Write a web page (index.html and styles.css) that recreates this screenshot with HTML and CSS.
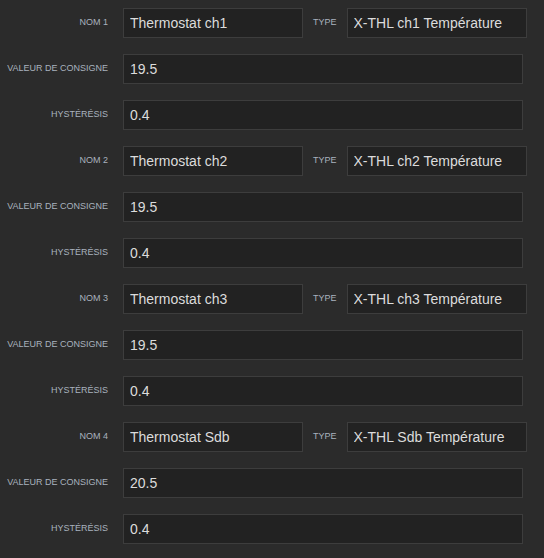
FILE: index.html
```html
<!DOCTYPE html>
<html>
<head>
  <meta charset="utf-8">
  <title>Thermostats</title>
  <link rel="stylesheet" href="styles.css">
</head>
<body>
  <div class="settings">

    <div class="group">
      <div class="row">
        <label class="lbl">Nom 1</label>
        <input class="field short" type="text" value="Thermostat ch1">
        <label class="lbl type-lbl">Type</label>
        <input class="field short" type="text" value="X-THL ch1 Température">
      </div>
      <div class="row">
        <label class="lbl">Valeur de consigne</label>
        <input class="field long" type="text" value="19.5">
      </div>
      <div class="row">
        <label class="lbl">Hystérésis</label>
        <input class="field long" type="text" value="0.4">
      </div>
    </div>

    <div class="group">
      <div class="row">
        <label class="lbl">Nom 2</label>
        <input class="field short" type="text" value="Thermostat ch2">
        <label class="lbl type-lbl">Type</label>
        <input class="field short" type="text" value="X-THL ch2 Température">
      </div>
      <div class="row">
        <label class="lbl">Valeur de consigne</label>
        <input class="field long" type="text" value="19.5">
      </div>
      <div class="row">
        <label class="lbl">Hystérésis</label>
        <input class="field long" type="text" value="0.4">
      </div>
    </div>

    <div class="group">
      <div class="row">
        <label class="lbl">Nom 3</label>
        <input class="field short" type="text" value="Thermostat ch3">
        <label class="lbl type-lbl">Type</label>
        <input class="field short" type="text" value="X-THL ch3 Température">
      </div>
      <div class="row">
        <label class="lbl">Valeur de consigne</label>
        <input class="field long" type="text" value="19.5">
      </div>
      <div class="row">
        <label class="lbl">Hystérésis</label>
        <input class="field long" type="text" value="0.4">
      </div>
    </div>

    <div class="group">
      <div class="row">
        <label class="lbl">Nom 4</label>
        <input class="field short" type="text" value="Thermostat Sdb">
        <label class="lbl type-lbl">Type</label>
        <input class="field short" type="text" value="X-THL Sdb Température">
      </div>
      <div class="row">
        <label class="lbl">Valeur de consigne</label>
        <input class="field long" type="text" value="20.5">
      </div>
      <div class="row">
        <label class="lbl">Hystérésis</label>
        <input class="field long" type="text" value="0.4">
      </div>
    </div>

  </div>
</body>
</html>
```

FILE: styles.css
```css
* {
  margin: 0;
  padding: 0;
  box-sizing: border-box;
}

html, body {
  background-color: #2b2b2b;
}

body {
  font-family: "Liberation Sans", Arial, sans-serif;
  padding-top: 8px;
}

.settings {
  display: flex;
  flex-direction: column;
  gap: 16px;
}

.group {
  display: flex;
  flex-direction: column;
  gap: 16px;
}

.row {
  display: flex;
  align-items: center;
  height: 30px;
}

.lbl {
  width: 108px;
  margin-right: 15px;
  text-align: right;
  font-size: 9px;
  text-transform: uppercase;
  color: #a9b2be;
  margin-top: -2px;
  white-space: nowrap;
}

.type-lbl {
  width: auto;
  margin-left: 10px;
  margin-right: 10px;
  text-align: left;
}

.field {
  height: 30px;
  background-color: #222222;
  border: 1px solid #3d3d3d;
  color: #dcdcdc;
  font-family: "Liberation Sans", Arial, sans-serif;
  font-size: 14px;
  padding: 0 6px;
  outline: none;
}

.short {
  width: 180px;
}

.long {
  width: 400px;
}
```
